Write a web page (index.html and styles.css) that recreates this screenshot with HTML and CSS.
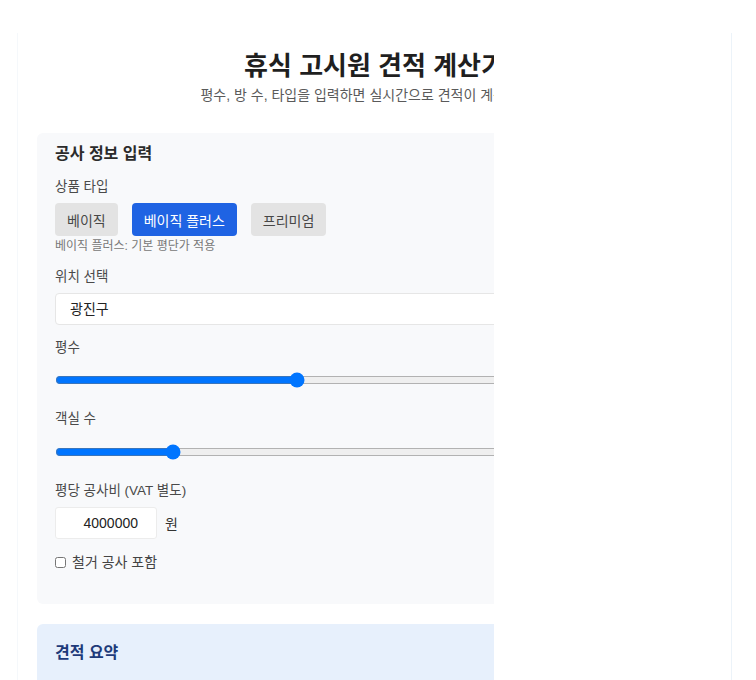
FILE: index.html
```html
<!DOCTYPE html>
<html lang="ko">
<head>
<meta charset="utf-8">
<title>휴식 고시원 견적 계산기</title>
<link rel="stylesheet" href="styles.css">
</head>
<body>
<div class="frame">
  <div class="clip">
    <div class="page">
      <header class="head">
        <h1 class="title">휴식 고시원 견적 계산기</h1>
        <p class="subtitle">평수, 방 수, 타입을 입력하면 실시간으로 견적이 계산됩니다.</p>
      </header>

      <section class="card">
        <h2 class="card-title">공사 정보 입력</h2>

        <div class="label">상품 타입</div>
        <div class="types">
          <button class="type-btn">베이직</button>
          <button class="type-btn active">베이직 플러스</button>
          <button class="type-btn">프리미엄</button>
        </div>
        <div class="hint">베이직 플러스: 기본 평단가 적용</div>

        <div class="label gap">위치 선택</div>
        <select class="select">
          <option>광진구</option>
        </select>

        <div class="label gap">평수</div>
        <input class="range r1" type="range" min="0" max="1000" value="376">

        <div class="label gap2">객실 수</div>
        <input class="range r2" type="range" min="0" max="1000" value="176">

        <div class="label gap2">평당 공사비 (VAT 별도)</div>
        <div class="price-row">
          <input class="price" type="number" value="4000000">
          <span class="unit">원</span>
        </div>

        <label class="check">
          <input type="checkbox" class="box">
          <span>철거 공사 포함</span>
        </label>
      </section>

      <section class="summary">
        <h2 class="summary-title">견적 요약</h2>
      </section>
    </div>
  </div>
</div>
</body>
</html>
```

FILE: styles.css
```css
html, body {
  margin: 0;
  padding: 0;
  background: #ffffff;
}
body {
  font-family: "Liberation Sans", "Noto Sans CJK KR", sans-serif;
  color: #222;
}
.frame {
  margin: 33px 0 0 17px;
  width: 715px;
  height: 647px;
  border-left: 1px solid #f5f8fb;
  border-right: 1px solid #ecf3f9;
  box-sizing: border-box;
  display: flex;
}
.clip {
  width: 476px;
  overflow: hidden;
  flex: none;
}
.page {
  width: 713px;
  box-sizing: border-box;
  padding: 17px 19px 0 19px;
}
.head {
  text-align: center;
  width: 675px;
}
.title {
  margin: 0;
  font-size: 26px;
  line-height: 32px;
  font-weight: 700;
  color: #1f1f1f;
}
.subtitle {
  margin: 4px 0 0;
  font-size: 14px;
  line-height: 18px;
  color: #5a5a5a;
  white-space: nowrap;
}
.card {
  margin-top: 29px;
  background: #f8f9fb;
  border-radius: 6px;
  padding: 10px 18px 33px 18px;
}
.card-title {
  margin: 0;
  font-size: 16px;
  line-height: 22px;
  font-weight: 700;
  color: #2b2b2b;
}
.label {
  margin-top: 13px;
  font-size: 13.5px;
  line-height: 18px;
  color: #4a4a4a;
}
.label.gap { margin-top: 14px; }
.label.gap2 { margin-top: 22px; }
.types {
  display: flex;
  gap: 14px;
  margin-top: 7px;
}
.type-btn {
  height: 33px;
  padding: 0 12px;
  border: none;
  border-radius: 4px;
  background: #e3e3e3;
  color: #474747;
  font-family: "Liberation Sans", "Noto Sans CJK KR", sans-serif;
  font-size: 14px;
}
.type-btn.active {
  background: #1f63e3;
  color: #ffffff;
}
.hint {
  margin-top: 2px;
  font-size: 12px;
  line-height: 16px;
  color: #777;
}
.select {
  display: block;
  margin-top: 7px;
  width: 100%;
  height: 32px;
  padding: 0 10px;
  border: 1px solid #e6e6e6;
  border-radius: 4px;
  background: #ffffff;
  font-family: "Liberation Sans", "Noto Sans CJK KR", sans-serif;
  font-size: 14px;
  color: #222;
}
.range {
  display: block;
  width: 100%;
  margin: 15px 0 0;
  height: 16px;
  accent-color: #0075ff;
}
.r2 { margin-top: 16px; }
.price-row {
  display: flex;
  align-items: center;
  gap: 8px;
  margin-top: 7px;
}
.price {
  width: 102px;
  height: 32px;
  box-sizing: border-box;
  border: 1px solid #ececec;
  border-radius: 3px;
  background: #ffffff;
  text-align: right;
  padding: 0 3px 0 4px;
  font-family: "Liberation Sans", "Noto Sans CJK KR", sans-serif;
  font-size: 14px;
  color: #222;
}
.unit {
  font-size: 14px;
  color: #333;
}
.check {
  display: flex;
  align-items: center;
  gap: 6px;
  margin-top: 14px;
  font-size: 14px;
  line-height: 18px;
  color: #444;
}
.box {
  margin: 0;
  width: 11px;
  height: 11px;
}
.summary {
  margin-top: 20px;
  background: #e7f0fc;
  border-radius: 6px;
  padding: 18px 18px 30px;
}
.summary-title {
  margin: 0;
  font-size: 16px;
  line-height: 22px;
  font-weight: 700;
  color: #1e3a7a;
}
```
